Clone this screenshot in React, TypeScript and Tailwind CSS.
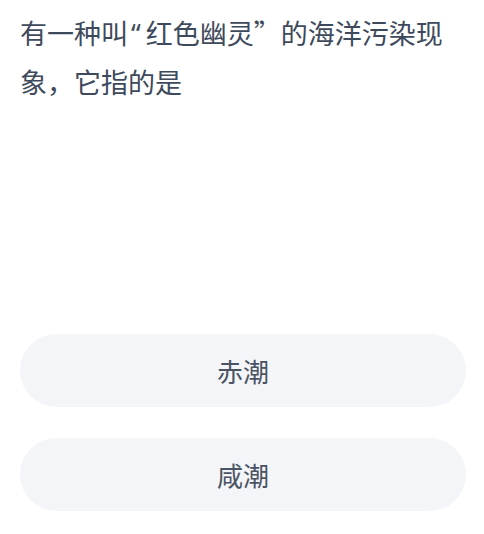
export default function App() {
  const options = ['赤潮', '咸潮']
  return (
    <div
      className="w-[484px] h-[534px] bg-white flex flex-col overflow-hidden"
      style={{ fontFamily: '"Noto Sans CJK SC", "Noto Sans", sans-serif' }}
    >
      <p className="pl-[20px] pr-[16px] pt-[9px] text-[27px] leading-[48px] text-[#3e4a5c]">
        有一种叫
        <span className="ml-[3px] mr-[5px] font-['Noto_Sans',sans-serif]">“</span>
        红色幽灵”的海洋污染现
        <br />
        象，它指的是
      </p>
      <div className="mt-[228px] flex flex-col gap-[31px] pl-[20px] pr-[18px]">
        {options.map((o) => (
          <div
            key={o}
            className="h-[73px] rounded-full bg-[#f3f5f8] flex items-center justify-center text-[26px] text-[#4a5363]"
          >
            {o}
          </div>
        ))}
      </div>
    </div>
  )
}
